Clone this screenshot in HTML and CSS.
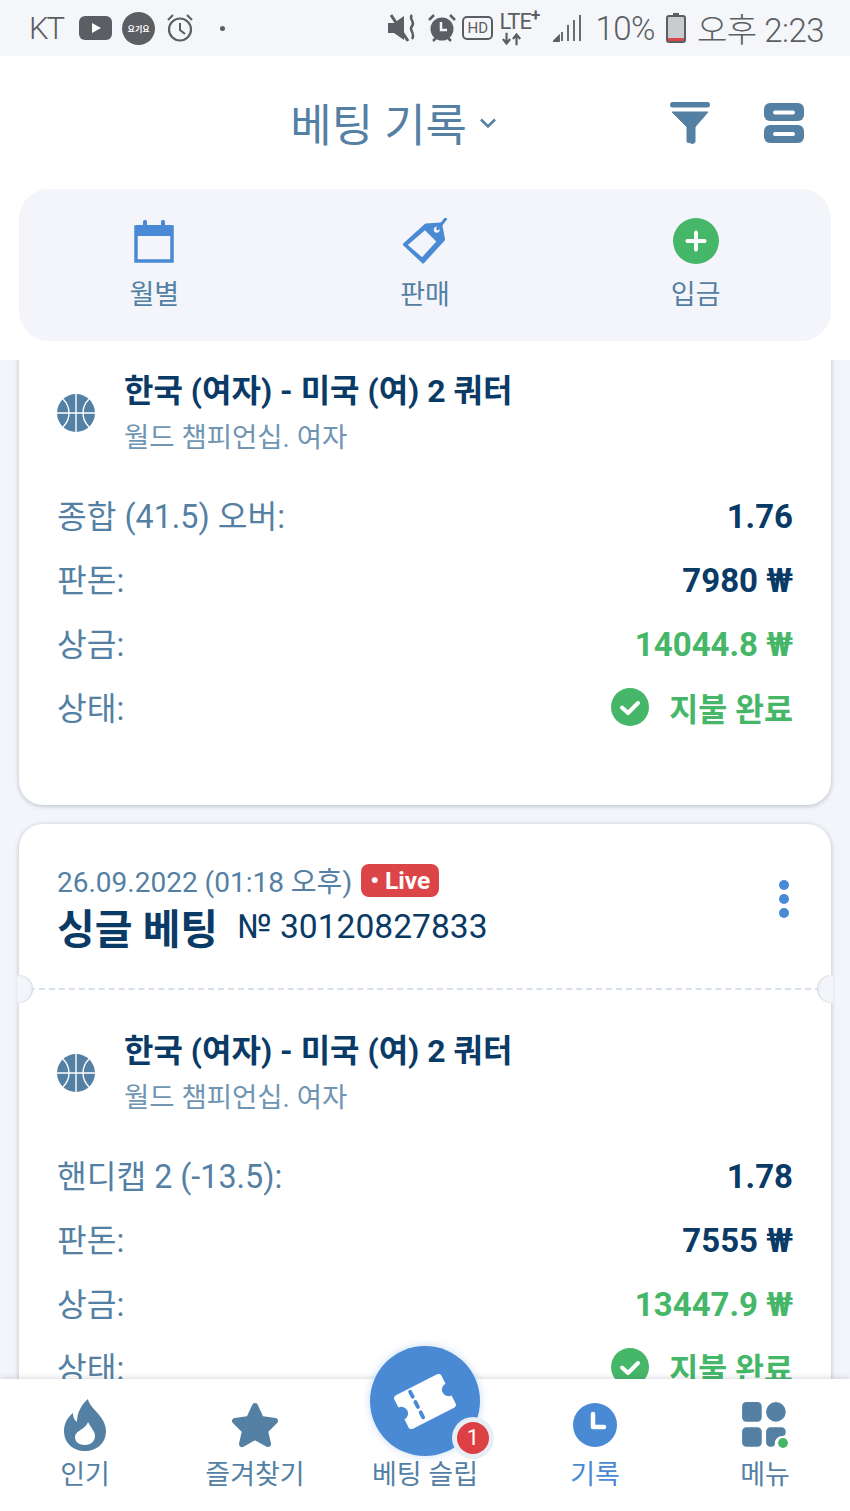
FILE: index.html
```html
<!DOCTYPE html>
<html lang="ko">
<head>
   <meta charset="UTF-8">
   <meta name="viewport" content="width=device-width, initial-scale=1.0">
   <title>베팅 기록</title>
   <link rel="stylesheet" href="styles.css">
</head>
<body>
   <div class="app">
      <div class="status-bar">
         <div class="status-left">
            <span class="carrier">KT</span>
            <svg class="st-yt" viewBox="0 0 33 24"><rect width="33" height="24" rx="6" fill="#5b5e62"/><path d="M13 7l9 5-9 5z" fill="#fff"/></svg>
            <span class="st-yogiyo">요기요</span>
            <svg class="st-alarm" viewBox="0 0 28 30"><circle cx="14" cy="16.500" r="11" fill="none" stroke="#5b5e62" stroke-width="2.200"/><path d="M14 10v7l5 4M2 7l5-5M26 7l-5-5" fill="none" stroke="#5b5e62" stroke-width="2"/></svg>
            <span class="st-dot"></span>
         </div>
         <div class="status-right">
            <svg class="st-mute" viewBox="0 0 32 30"><path d="M1 10h6l10-7v24l-10-7H1z" fill="#5b5e62"/><path d="M4 2l17 26" stroke="#5b5e62" stroke-width="3"/><path d="M25 2c-4 4 4 7 0 11s4 7 0 13" fill="none" stroke="#5b5e62" stroke-width="2.500"/></svg>
            <svg class="st-alarm-on" viewBox="0 0 30 30"><circle cx="15" cy="16" r="11.500" fill="#5b5e62"/><path d="M14 9v8h6" fill="none" stroke="#f5f6fa" stroke-width="2.500"/><path d="M2 7l5-5M28 7l-5-5M6 28l3-3M24 28l-3-3" stroke="#5b5e62" stroke-width="2.500"/></svg>
            <span class="st-hd">HD</span>
            <span class="st-lte">LTE<sup>+</sup><svg class="st-arrows" viewBox="0 0 22 14"><path d="M5 0v10M1 7l4 5 4-5M16 14V4M12 7l4-5 4 5" fill="none" stroke="#5b5e62" stroke-width="2.400"/></svg></span>
            <svg class="st-signal" viewBox="0 0 28 28"><path d="M1 27l5-5v5zM9 27V18M15 27V11M21 27V6M27 27V1" fill="#5b5e62" stroke="#5b5e62" stroke-width="1.800"/></svg>
            <span class="st-text">10%</span>
            <svg class="st-battery" viewBox="0 0 20 30"><rect x="7" y="0" width="6" height="4" fill="#5b5e62"/><rect x="1" y="3" width="18" height="26" rx="2" fill="#c9cbce" stroke="#5b5e62" stroke-width="2"/><rect x="2" y="25" width="16" height="3" fill="#d8484a"/></svg>
            <span class="st-text">오후 2:23</span>
         </div>
      </div>

      <div class="top-bar">
         <div class="page-title">
            <span>베팅 기록</span>
            <svg class="caret" viewBox="0 0 18 12"><path d="M2 2.500l7 7 7-7" fill="none" stroke="#5480a4" stroke-width="2.500"/></svg>
         </div>
         <svg class="icon-filter" viewBox="0 0 40 42"><rect x="0" y="0" width="40" height="5.500" rx="2.700" fill="#5480a4"/><path d="M2 10h36L25 25v15l-2 1.500-6-1.500V25z" fill="#5480a4" stroke="#5480a4" stroke-linejoin="round"/></svg>
         <svg class="icon-view" viewBox="0 0 40 40"><rect width="40" height="18" rx="6" fill="#5480a4"/><rect y="22" width="40" height="18" rx="6" fill="#5480a4"/><rect x="9" y="7.500" width="22" height="4" rx="2" fill="#fff"/><rect x="9" y="29" width="22" height="4" rx="2" fill="#fff"/></svg>
      </div>

      <div class="actions-wrap">
         <div class="actions">
            <div class="action">
               <svg class="action-icon" viewBox="-3 -1 46 46"><path d="M2 8h36v34H2z" fill="none" stroke="#4a8ad4" stroke-width="3.500"/><rect x="2" y="6" width="36" height="11" fill="#4a8ad4"/><rect x="9" y="1" width="4" height="8" rx="1.500" fill="#4a8ad4"/><rect x="27" y="1" width="4" height="8" rx="1.500" fill="#4a8ad4"/></svg>
               <span>월별</span>
            </div>
            <div class="action">
               <svg class="action-icon icon-tag" viewBox="0 0 46 47"><path d="M2 27L24 7l15-1 3 16-21 23z" fill="#4a8ad4" stroke="#4a8ad4" stroke-width="3" stroke-linejoin="round"/><path d="M5.500 27.500L23 12.500 34.500 24 20 40z" fill="#f3f5fa"/><circle cx="35" cy="12" r="3" fill="#f3f5fa"/><path d="M36 11l8-10" stroke="#4a8ad4" stroke-width="3" stroke-linecap="round"/></svg>
               <span>판매</span>
            </div>
            <div class="action">
               <svg class="action-icon" viewBox="0 0 48 48"><circle cx="24" cy="24" r="24" fill="#46b668"/><path d="M24 15v18M15 24h18" stroke="#fff" stroke-width="4" stroke-linecap="round"/></svg>
               <span>입금</span>
            </div>
         </div>
      </div>

      <div class="bet-list">
         <div class="bet-card bet-card-cut">
            <div class="bet-body">
               <div class="match">
                  <svg class="ball" viewBox="0 0 38 38"><circle cx="19" cy="19" r="19" fill="#5480a4"/><path d="M19 0v38M0 19h38M6 5c8 8 8 20 0 28M32 5c-8 8-8 20 0 28" fill="none" stroke="#fff" stroke-width="1.400"/></svg>
                  <div class="match-text">
                     <div class="match-name">한국 (여자) - 미국 (여) 2 쿼터</div>
                     <div class="match-league">월드 챔피언십. 여자</div>
                  </div>
               </div>
               <div class="rows">
                  <div class="row"><span class="row-label">종합 (41.5) 오버:</span><span class="row-value">1.76</span></div>
                  <div class="row"><span class="row-label">판돈:</span><span class="row-value">7980 ₩</span></div>
                  <div class="row"><span class="row-label">상금:</span><span class="row-value is-green">14044.8 ₩</span></div>
                  <div class="row"><span class="row-label">상태:</span><span class="row-status"><svg class="check" viewBox="0 0 38 38"><circle cx="19" cy="19" r="19" fill="#46b668"/><path d="M11 19.500l6 5.500 10-10" fill="none" stroke="#fff" stroke-width="4" stroke-linecap="round" stroke-linejoin="round"/></svg>지불 완료</span></div>
               </div>
            </div>
         </div>

         <div class="bet-card">
            <div class="bet-head">
               <div class="head-text">
                  <div class="date-line"><span>26.09.2022 (01:18 오후)</span><span class="live">• Live</span></div>
                  <div class="title-line"><span class="bet-type">싱글 베팅</span><span class="bet-no">№ 30120827833</span></div>
               </div>
               <div class="kebab"><i></i><i></i><i></i></div>
            </div>
            <div class="bet-body">
               <div class="match">
                  <svg class="ball" viewBox="0 0 38 38"><circle cx="19" cy="19" r="19" fill="#5480a4"/><path d="M19 0v38M0 19h38M6 5c8 8 8 20 0 28M32 5c-8 8-8 20 0 28" fill="none" stroke="#fff" stroke-width="1.400"/></svg>
                  <div class="match-text">
                     <div class="match-name">한국 (여자) - 미국 (여) 2 쿼터</div>
                     <div class="match-league">월드 챔피언십. 여자</div>
                  </div>
               </div>
               <div class="rows">
                  <div class="row"><span class="row-label">핸디캡 2 (-13.5):</span><span class="row-value">1.78</span></div>
                  <div class="row"><span class="row-label">판돈:</span><span class="row-value">7555 ₩</span></div>
                  <div class="row"><span class="row-label">상금:</span><span class="row-value is-green">13447.9 ₩</span></div>
                  <div class="row"><span class="row-label">상태:</span><span class="row-status"><svg class="check" viewBox="0 0 38 38"><circle cx="19" cy="19" r="19" fill="#46b668"/><path d="M11 19.500l6 5.500 10-10" fill="none" stroke="#fff" stroke-width="4" stroke-linecap="round" stroke-linejoin="round"/></svg>지불 완료</span></div>
               </div>
            </div>
         </div>
      </div>

      <div class="tab-bar">
         <div class="tab">
            <svg class="tab-icon tab-flame" viewBox="0 0 42 52"><path fill-rule="evenodd" d="M24 0c1 9 18 17 18 32 0 12-9 20-21 20S0 44 0 32c0-8 4-14 9-18 0 4 1 7 4 9C13 14 17 6 24 0zM21 46c6 0 10-4 10-9 0-5-4-8-7-14-2 5-5 6-9 9-3 2-4 4-4 6 0 5 4 8 10 8z" fill="#5480a4"/></svg>
            <span>인기</span>
         </div>
         <div class="tab">
            <svg class="tab-icon" viewBox="0 0 48 46"><path d="M24 4l6 13 14 2-10 10 3 13-13-7-13 7 3-13L4 19l14-2z" fill="#5480a4" stroke="#5480a4" stroke-width="6" stroke-linejoin="round"/></svg>
            <span>즐겨찾기</span>
         </div>
         <div class="tab tab-slip">
            <div class="slip-fab">
               <svg class="ticket" viewBox="0 0 60 50"><g transform="rotate(-27 30 25)"><path fill-rule="evenodd" d="M9 8h42a3 3 0 0 1 3 3v8a6 6 0 0 0 0 12v8a3 3 0 0 1-3 3H9a3 3 0 0 1-3-3v-8a6 6 0 0 0 0-12v-8a3 3 0 0 1 3-3z" fill="#fff"/><path d="M22 11v30" stroke="#4a8ad4" stroke-width="3.500" stroke-dasharray="5 5.500" stroke-linecap="round"/></g></svg>
               <span class="slip-badge">1</span>
            </div>
            <span>베팅 슬립</span>
         </div>
         <div class="tab is-active">
            <svg class="tab-icon" viewBox="-1 -1 46 46"><circle cx="22" cy="22" r="22" fill="#4a8ad4"/><path d="M20 11v13h11" fill="none" stroke="#fff" stroke-width="4.500" stroke-linecap="round" stroke-linejoin="round"/></svg>
            <span>기록</span>
         </div>
         <div class="tab">
            <svg class="tab-icon" viewBox="0 0 44 42"><rect x="1" y="0" width="18" height="18" rx="4" fill="#5480a4"/><circle cx="32" cy="9" r="9" fill="#5480a4"/><rect x="1" y="23" width="18" height="18" rx="4" fill="#5480a4"/><path d="M23 27a4 4 0 0 1 4-4h10a4 4 0 0 1 4 4c0 3-1 4-3 4-4 0-7 3-7 7 0 2-1 3-3 3h-1a4 4 0 0 1-4-4z" fill="#5480a4"/><circle cx="38.500" cy="37.500" r="4.500" fill="#46b668"/></svg>
            <span>메뉴</span>
         </div>
      </div>
   </div>
</body>
</html>
```

FILE: styles.css
```css
* {
   box-sizing: border-box;
}

body {
   margin: 0;
   padding: 0;
   font-family: Roboto, "Noto Sans CJK KR", sans-serif;
   background-color: #f3f5fa;
   color: #5480a4;
}

.app {
   display: flex;
   flex-direction: column;
   width: 850px;
   height: 1511px;
   overflow: hidden;
}

/* status bar */
.status-bar {
   display: flex;
   justify-content: space-between;
   align-items: center;
   flex: 0 0 56px;
   padding: 0 26px 0 29px;
   background-color: #f5f6fa;
   color: #5b5e62;
}

.status-left, .status-right {
   display: flex;
   align-items: center;
}

.carrier {
   font-size: 31px;
   font-weight: 300;
   letter-spacing: -2px;
   margin-right: 16px;
}

.st-yt {
   width: 33px;
   height: 24px;
   margin-right: 10px;
}

.st-yogiyo {
   display: flex;
   align-items: center;
   justify-content: center;
   width: 33px;
   height: 33px;
   margin-right: 11px;
   border-radius: 50%;
   background-color: #5b5e62;
   color: #fff;
   font-size: 8px;
   font-weight: 700;
   white-space: nowrap;
}

.st-alarm {
   width: 28px;
   height: 30px;
   margin-right: 26px;
}

.st-dot {
   width: 5px;
   height: 5px;
   border-radius: 50%;
   background-color: #5b5e62;
}

.st-mute {
   width: 32px;
   height: 30px;
   margin-right: 8px;
}

.st-alarm-on {
   width: 30px;
   height: 30px;
   margin-right: 5px;
}

.st-hd {
   width: 31px;
   height: 24px;
   margin-right: 6px;
   border: 2px solid #5b5e62;
   border-radius: 5px;
   font-size: 15px;
   line-height: 20px;
   text-align: center;
}

.st-lte {
   position: relative;
   width: 48px;
   height: 34px;
   margin-right: 6px;
   font-size: 22px;
   line-height: 22px;
   letter-spacing: -1px;
   white-space: nowrap;
}

.st-lte sup {
   font-size: 17px;
   line-height: 0;
   font-weight: 700;
}

.st-arrows {
   position: absolute;
   left: 3px;
   top: 21px;
   width: 20px;
   height: 14px;
}

.st-signal {
   width: 28px;
   height: 28px;
   margin-right: 14px;
}

.st-text {
   font-size: 33px;
   font-weight: 300;
   letter-spacing: -0.5px;
   white-space: nowrap;
}

.st-battery {
   width: 20px;
   height: 30px;
   margin: 0 11px 0 11px;
}

/* page header */
.top-bar {
   display: flex;
   justify-content: flex-end;
   align-items: center;
   flex: 0 0 133px;
   padding-right: 46px;
   background-color: #fff;
}

.page-title {
   display: flex;
   align-items: center;
   margin-right: 173px;
   font-size: 45px;
   white-space: nowrap;
}

.caret {
   width: 18px;
   height: 12px;
   margin-left: 12px;
}

.icon-filter {
   width: 40px;
   height: 42px;
   margin-right: 54px;
}

.icon-view {
   width: 40px;
   height: 40px;
}

.actions-wrap {
   flex: 0 0 171px;
   padding: 0 19px 19px;
   background-color: #fff;
}

.actions {
   display: grid;
   grid-template-columns: repeat(3, 1fr);
   height: 152px;
   padding-top: 29px;
   background-color: #f3f5fa;
   border-radius: 30px;
}

.action {
   display: flex;
   flex-direction: column;
   align-items: center;
   font-size: 27px;
   line-height: 40px;
}

.action-icon {
   width: 46px;
   height: 46px;
   margin-bottom: 11px;
}

/* bet cards */
.bet-list {
   flex: 1;
   min-height: 0;
   padding: 0 19px;
   overflow: hidden;
}

.bet-card {
   margin-bottom: 19px;
   background-color: #fff;
   border-radius: 24px;
   box-shadow: 0 1px 5px rgba(60, 70, 90, 0.32);
}

.bet-card-cut {
   margin-top: -30px;
   padding-bottom: 65px;
}

.bet-head {
   position: relative;
   display: flex;
   justify-content: space-between;
   align-items: flex-start;
   height: 166px;
   padding: 36px 38px 0;
   border-bottom: 2px dashed #d5e0ea;
}

.bet-head::before, .bet-head::after {
   content: "";
   position: absolute;
   bottom: -15px;
   width: 16px;
   height: 28px;
   background-color: #f3f5fa;
}

.bet-head::before {
   left: -2px;
   border-radius: 0 14px 14px 0;
   box-shadow: inset -1px 0 2px rgba(60, 70, 90, 0.18);
}

.bet-head::after {
   right: -2px;
   border-radius: 14px 0 0 14px;
   box-shadow: inset 1px 0 2px rgba(60, 70, 90, 0.18);
}

.date-line {
   display: flex;
   align-items: center;
   height: 40px;
   font-size: 28px;
   white-space: nowrap;
}

.live {
   height: 33px;
   margin: 0 0 -1px 9px;
   padding: 0 9px;
   background-color: #dc4548;
   border-radius: 8px;
   color: #fff;
   font-size: 24.500px;
   font-weight: 700;
   line-height: 33px;
}

.title-line {
   display: flex;
   align-items: center;
   height: 48px;
   margin-top: 2px;
   color: #0a3a66;
   white-space: nowrap;
}

.bet-type {
   font-size: 41px;
   font-weight: 700;
   margin-right: 19px;
}

.bet-no {
   font-size: 33.600px;
}

.kebab {
   display: flex;
   flex-direction: column;
   gap: 4px;
   margin: 20px 4px 0 0;
}

.kebab i {
   width: 10px;
   height: 10px;
   border-radius: 50%;
   background-color: #4a8ad4;
}

.bet-body {
   padding: 38px 38px 0;
}

.match {
   display: flex;
   align-items: center;
   gap: 29px;
}

.ball {
   width: 38px;
   height: 38px;
   margin-bottom: 4px;
}

.match-name {
   color: #0a3a66;
   font-size: 32px;
   font-weight: 700;
   line-height: 46px;
   white-space: nowrap;
}

.match-league {
   color: #6f95b3;
   font-size: 27.500px;
   line-height: 47px;
   white-space: nowrap;
}

.rows {
   margin-top: 23px;
}

.row {
   display: flex;
   justify-content: space-between;
   align-items: center;
   height: 64px;
}

.row-label {
   margin-bottom: 4px;
   font-size: 32.300px;
   white-space: nowrap;
}

.row-value {
   color: #0a3a66;
   font-size: 33px;
   font-weight: 700;
   white-space: nowrap;
}

.row-value.is-green, .row-status {
   color: #46b668;
}

.row-status {
   display: flex;
   align-items: center;
   margin-bottom: 2px;
   font-size: 31.500px;
   font-weight: 700;
   white-space: nowrap;
}

.check {
   width: 38px;
   height: 38px;
   margin-right: 20px;
}

/* bottom nav */
.tab-bar {
   position: relative;
   display: grid;
   grid-template-columns: repeat(5, 1fr);
   flex: 0 0 132px;
   background-color: #fff;
   box-shadow: 0 -1px 6px rgba(60, 70, 90, 0.2);
}

.tab {
   display: flex;
   flex-direction: column;
   align-items: center;
   justify-content: flex-end;
   padding-bottom: 16px;
   font-size: 27px;
   line-height: 40px;
   white-space: nowrap;
}

.tab.is-active {
   color: #4a8ad4;
}

.tab-icon {
   height: 46px;
   width: 48px;
   margin-bottom: 7px;
}

.tab-flame {
   height: 52px;
   margin: -3px 0 4px;
}

.slip-fab {
   position: absolute;
   top: -33px;
   width: 110px;
   height: 110px;
   display: flex;
   align-items: center;
   justify-content: center;
   background-color: #4a8ad4;
   border-radius: 50%;
   box-shadow: 0 0 8px rgba(74, 138, 212, 0.3);
}

.ticket {
   width: 66px;
   height: 55px;
}

.slip-badge {
   position: absolute;
   left: 87px;
   top: 76px;
   width: 32px;
   height: 32px;
   background-color: #dc4044;
   border-radius: 50%;
   box-shadow: 0 0 0 5px #e8eef6;
   color: #fff;
   font-size: 22px;
   line-height: 32px;
   text-align: center;
}
```
